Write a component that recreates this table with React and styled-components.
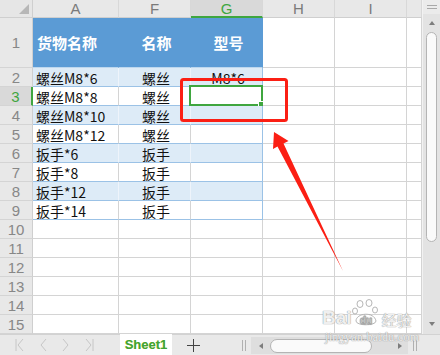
import React from "react";
import styled, { createGlobalStyle } from "styled-components";

const Global = createGlobalStyle`
  html, body { margin: 0; padding: 0; background: #fff; }
  body { font-family: "Noto Sans CJK SC", "Liberation Sans", sans-serif; }
`;

const Window = styled.div`
  position: relative;
  width: 440px;
  height: 355px;
  overflow: hidden;
  display: flex;
  flex-direction: column;
  background: #fff;
`;

const Main = styled.div`
  display: flex;
  height: 334px;
`;

const Sheet = styled.div`
  display: grid;
  grid-template-columns: 33px 86px 72px 72px 72px 72px 15px;
  grid-template-rows: 18px 50px repeat(14, 19px);
  width: 422px;
`;

const Corner = styled.div`
  position: relative;
  background: #e6e6e6;
  border-right: 1px solid #cfcfcf;
  border-bottom: 1px solid #cfcfcf;
  box-sizing: border-box;

  &::after {
    content: "";
    position: absolute;
    right: 3px;
    bottom: 3px;
    border-left: 10px solid transparent;
    border-bottom: 10px solid #b7b7b7;
  }
`;

const ColHead = styled.div`
  box-sizing: border-box;
  display: flex;
  align-items: center;
  justify-content: center;
  background: ${(p) => (p.$active ? "#d9d9d9" : "#e8e8e8")};
  border-right: 1px solid #d8d8d8;
  border-bottom: ${(p) => (p.$active ? "2px solid #3fa63f" : "1px solid #cfcfcf")};
  color: ${(p) => (p.$active ? "#3fa63f" : "#7a7a7a")};
  font-family: "Liberation Sans", sans-serif;
  font-size: 15px;
  padding-top: ${(p) => (p.$active ? "1px" : "0")};
`;

const RowHead = styled.div`
  box-sizing: border-box;
  display: flex;
  align-items: center;
  justify-content: center;
  background: ${(p) => (p.$active ? "#d9d9d9" : "#e8e8e8")};
  border-right: ${(p) => (p.$active ? "2px solid #3fa63f" : "1px solid #cfcfcf")};
  border-bottom: 1px solid #d4d4d4;
  color: ${(p) => (p.$active ? "#3fa63f" : "#878787")};
  font-family: "Liberation Sans", sans-serif;
  font-size: 15px;
`;

const Cell = styled.div`
  position: relative;
  box-sizing: border-box;
  display: flex;
  align-items: center;
  justify-content: ${(p) => (p.$center ? "center" : "flex-start")};
  padding: ${(p) => (p.$head ? "0 0 0 4px" : "2px 0 0 3px")};
  background: ${(p) => p.$bg || "#fff"};
  border-right: 1px solid ${(p) => p.$vline || "#d4d4d4"};
  border-bottom: 1px solid ${(p) => p.$hline || "#d4d4d4"};
  color: ${(p) => (p.$head ? "#fff" : "#111")};
  font-size: ${(p) => (p.$head ? "15px" : "14px")};
  font-weight: ${(p) => (p.$head ? 700 : 400)};
  white-space: nowrap;
  line-height: 1;
`;

const Selection = styled.div`
  position: absolute;
  left: -2px;
  top: -2px;
  right: -1px;
  bottom: -1px;
  border: 2px solid #3fa63f;
  pointer-events: none;

  &::after {
    content: "";
    position: absolute;
    right: -4px;
    bottom: -4px;
    width: 5px;
    height: 5px;
    background: #3fa63f;
    border: 1px solid #fff;
  }
`;

const VScroll = styled.div`
  width: 18px;
  display: flex;
  flex-direction: column;
  align-items: center;
  background: #e3e3e3;
  border-left: 1px solid #f2f2f2;
  box-sizing: border-box;
`;

const Grip = styled.div`
  width: 100%;
  height: 14px;
  background: #ebebeb;
  display: flex;
  flex-direction: column;
  align-items: center;
  justify-content: center;
  gap: 2px;

  span {
    width: 10px;
    height: 1px;
    background: #a8a8a8;
  }
`;

const ArrowUp = styled.div`
  margin-top: 7px;
  border-left: 3px solid transparent;
  border-right: 3px solid transparent;
  border-bottom: 4px solid #7d7d7d;
`;

const ArrowDown = styled.div`
  margin-top: auto;
  margin-bottom: 8px;
  border-left: 3px solid transparent;
  border-right: 3px solid transparent;
  border-top: 4px solid #7d7d7d;
`;

const VThumb = styled.div`
  margin-top: 7px;
  width: 11px;
  height: 210px;
  background: #fafafa;
  border: 1px solid #b4b4b4;
  border-radius: 6px;
  box-sizing: border-box;
`;

const BottomBar = styled.div`
  height: 21px;
  display: flex;
  align-items: stretch;
  background: #e9e9e9;
  border-top: 1px solid #d2d2d2;
`;

const Nav = styled.div`
  width: 107px;
  display: flex;
  align-items: center;
  justify-content: space-around;
  padding: 0 6px 0 8px;
  box-sizing: border-box;
`;

const Tab = styled.div`
  width: 52px;
  margin-left: 13px;
  margin-top: -1px;
  background: #fff;
  display: flex;
  align-items: center;
  justify-content: center;
  color: #3ea43a;
  font-family: "Liberation Sans", sans-serif;
  font-weight: 700;
  font-size: 13px;
  text-shadow: 0 0 0.5px #d8d040;
`;

const Add = styled.div`
  width: 43px;
  display: flex;
  align-items: center;
  justify-content: center;
`;

const Splitter = styled.div`
  display: flex;
  gap: 2px;
  align-items: center;
  margin-left: ${(p) => p.$ml || 0}px;

  span {
    width: 1px;
    height: 11px;
    background: #b0b0b0;
  }
`;

const HTrack = styled.div`
  width: 157px;
  margin: 2px 0 1px 5px;
  background: #dedede;
  display: flex;
  align-items: center;
  padding: 0 6px 0 8px;
  box-sizing: border-box;
`;

const HThumb = styled.div`
  width: 102px;
  height: 14px;
  margin-left: 7px;
  background: #fafafa;
  border: 1px solid #b4b4b4;
  border-radius: 7px;
  box-sizing: border-box;
`;

const TriLeft = styled.div`
  border-top: 3px solid transparent;
  border-bottom: 3px solid transparent;
  border-right: 4px solid #7d7d7d;
`;

const TriRight = styled.div`
  margin-left: auto;
  border-top: 3px solid transparent;
  border-bottom: 3px solid transparent;
  border-left: 4px solid #7d7d7d;
`;

const Overlay = styled.svg`
  position: absolute;
  left: 0;
  top: 0;
  pointer-events: none;
`;

const Watermark = styled.div`
  position: absolute;
  left: 322px;
  top: 299px;
  display: flex;
  flex-direction: column;
  align-items: flex-start;
  pointer-events: none;
  color: rgba(255, 255, 255, 0.85);
  text-shadow: 0 0 1px #9a9a9a, 0 0 1px #9a9a9a;
`;

const MarkRow = styled.div`
  display: flex;
  align-items: flex-end;
  font-family: "Liberation Sans", sans-serif;
  font-weight: 700;
  font-size: 19px;
  line-height: 1;

  em {
    font-style: normal;
    font-family: "Noto Sans CJK SC", sans-serif;
    font-size: 15px;
    font-weight: 400;
    margin-left: 2px;
  }
`;

const MarkUrl = styled.div`
  margin-left: 3px;
  margin-top: 3px;
  font-family: "Liberation Serif", serif;
  font-size: 12px;
  letter-spacing: 0.3px;
`;

const letters = ["A", "F", "G", "H", "I", ""];

const rows = [
  ["螺丝M8*6", "螺丝", "M8*6"],
  ["螺丝M8*8", "螺丝", ""],
  ["螺丝M8*10", "螺丝", ""],
  ["螺丝M8*12", "螺丝", ""],
  ["扳手*6", "扳手", ""],
  ["扳手*8", "扳手", ""],
  ["扳手*12", "扳手", ""],
  ["扳手*14", "扳手", ""],
];

function NavIcon({ kind }) {
  const c = "#c6c6c6";
  return (
    <svg width="12" height="14" viewBox="0 0 12 14">
      {kind === "first" && <line x1="2" y1="1" x2="2" y2="13" stroke={c} />}
      {kind === "last" && <line x1="10" y1="1" x2="10" y2="13" stroke={c} />}
      {(kind === "first" || kind === "prev") && (
        <polyline points="9,1 4,7 9,13" fill="none" stroke={c} />
      )}
      {(kind === "next" || kind === "last") && (
        <polyline points="3,1 8,7 3,13" fill="none" stroke={c} />
      )}
    </svg>
  );
}

function Paw() {
  return (
    <svg width="28" height="28" viewBox="0 0 28 28">
      <g fill="rgba(255,255,255,0.85)" stroke="#a5a5a5" strokeWidth="0.8">
        <ellipse cx="8" cy="5" rx="3" ry="3.5" />
        <ellipse cx="17" cy="4" rx="3" ry="3.5" />
        <ellipse cx="3" cy="12" rx="2.5" ry="3" />
        <ellipse cx="23" cy="11" rx="2.5" ry="3" />
        <path d="M4 22 C4 14 22 12 24 22 C24 27 4 27 4 22 Z" />
      </g>
      <text x="14" y="25" textAnchor="middle" fontSize="10" fontWeight="700"
        fontFamily="Liberation Sans, sans-serif" fill="#fff" stroke="#a5a5a5" strokeWidth="0.4">du</text>
    </svg>
  );
}

function TableRow({ data, index }) {
  const n = index + 2;
  const band = index % 2 === 0;
  const bg = band ? "#ddebf7" : "#fff";
  const vline = band ? "#eef4fb" : "#d4d4d4";
  return (
    <>
      <RowHead $active={n === 3}>{n}</RowHead>
      <Cell $bg={bg} $vline={vline} $hline="#9bc2e6">{data[0]}</Cell>
      <Cell $bg={bg} $vline={vline} $hline="#9bc2e6" $center>{data[1]}</Cell>
      <Cell $bg={bg} $vline="#9bc2e6" $hline="#9bc2e6" $center>
        {data[2]}
        {n === 3 && <Selection />}
      </Cell>
      <Cell />
      <Cell />
      <Cell />
    </>
  );
}

function EmptyRow({ n }) {
  return (
    <>
      <RowHead>{n}</RowHead>
      {[0, 1, 2, 3, 4, 5].map((i) => (
        <Cell key={i} />
      ))}
    </>
  );
}

export default function App() {
  return (
    <Window>
      <Global />
      <Main>
        <Sheet>
          <Corner />
          {letters.map((l, i) => (
            <ColHead key={i} $active={l === "G"}>{l}</ColHead>
          ))}

          <RowHead>1</RowHead>
          <Cell $head $bg="#5b9bd5" $vline="#5b9bd5" $hline="#bdd7ee">货物名称</Cell>
          <Cell $head $center $bg="#5b9bd5" $vline="#5b9bd5" $hline="#bdd7ee">名称</Cell>
          <Cell $head $center $bg="#5b9bd5" $vline="#5b9bd5" $hline="#bdd7ee">型号</Cell>
          <Cell />
          <Cell />
          <Cell />

          {rows.map((r, i) => (
            <TableRow key={i} data={r} index={i} />
          ))}
          {[10, 11, 12, 13, 14, 15].map((n) => (
            <EmptyRow key={n} n={n} />
          ))}
        </Sheet>
        <VScroll>
          <Grip>
            <span />
            <span />
          </Grip>
          <ArrowUp />
          <VThumb />
          <ArrowDown />
        </VScroll>
      </Main>

      <BottomBar>
        <Nav>
          <NavIcon kind="first" />
          <NavIcon kind="prev" />
          <NavIcon kind="next" />
          <NavIcon kind="last" />
        </Nav>
        <Tab>Sheet1</Tab>
        <Add>
          <svg width="13" height="13" viewBox="0 0 13 13">
            <path d="M6.5 0 V13 M0 6.5 H13" stroke="#444" strokeWidth="1" />
          </svg>
        </Add>
        <Splitter $ml={27}>
          <span />
          <span />
        </Splitter>
        <HTrack>
          <TriLeft />
          <HThumb />
          <TriRight />
        </HTrack>
        <Splitter $ml={5}>
          <span />
          <span />
        </Splitter>
      </BottomBar>

      <Watermark>
        <MarkRow>
          Bai
          <Paw />
          <em>经验</em>
        </MarkRow>
        <MarkUrl>jingyan.baidu.com</MarkUrl>
      </Watermark>

      <Overlay width="440" height="355" viewBox="0 0 440 355">
        <rect x="181.5" y="79.5" width="105" height="41" rx="2"
          fill="none" stroke="#fb1f14" strokeWidth="3" />
        <polygon
          points="274,132 288.5,141 283.5,143.5 343,271 277.5,146.5 273,149"
          fill="#fb1f14"
        />
      </Overlay>
    </Window>
  );
}
